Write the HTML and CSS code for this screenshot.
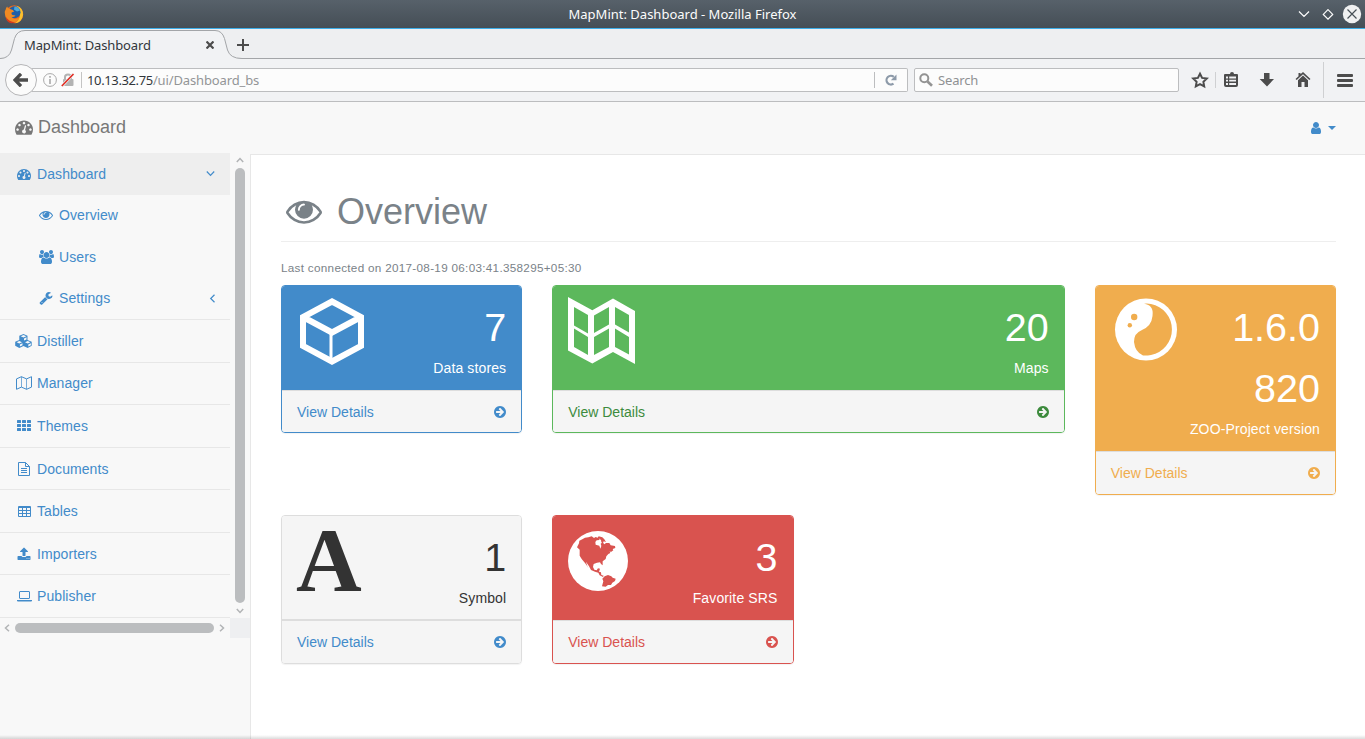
FILE: index.html
```html
<!DOCTYPE html>
<html lang="en">
<head>
<meta charset="utf-8">
<title>MapMint: Dashboard</title>
<link rel="stylesheet" href="styles.css">
</head>
<body>
<svg class="sprite" aria-hidden="true">
  <symbol id="tach" viewBox="0 0 1792 1792"><path d="M384 1152q0-53-37.5-90.5t-90.5-37.5-90.5 37.5-37.5 90.5 37.5 90.5 90.5 37.5 90.5-37.5 37.5-90.5zm192-448q0-53-37.5-90.5t-90.5-37.5-90.5 37.5-37.5 90.5 37.5 90.5 90.5 37.5 90.5-37.5 37.5-90.5zm428 481l101-382q6-26-7.5-48.5t-38.5-29.5-48 6.5-30 39.5l-101 382q-60 5-107 43.5t-63 98.5q-20 77 20 146t117 89 146-20 89-117q16-60-6-117t-72-91zm660-33q0-53-37.5-90.5t-90.5-37.5-90.5 37.5-37.5 90.5 37.5 90.5 90.5 37.5 90.5-37.5 37.5-90.5zm-640-640q0-53-37.5-90.5t-90.5-37.5-90.5 37.5-37.5 90.5 37.5 90.5 90.5 37.5 90.5-37.5 37.5-90.5zm448 192q0-53-37.5-90.5t-90.5-37.5-90.5 37.5-37.5 90.5 37.5 90.5 90.5 37.5 90.5-37.5 37.5-90.5zm320 448q0 261-141 483-19 29-54 29h-1402q-35 0-54-29-141-221-141-483 0-182 71-348t191-286 286-191 348-71 348 71 286 191 191 286 71 348z"/></symbol>
  <symbol id="eye" viewBox="0 0 1792 1792"><path d="M1664 960q-152-236-381-353 61 104 61 225 0 185-131.5 316.5t-316.5 131.5-316.5-131.5-131.5-316.5q0-121 61-225-229 117-381 353 133 205 333.500 326.500t434.500 121.500 434.500-121.500 333.500-326.500zm-720-384q0-20-14-34t-34-14q-125 0-214.500 89.500t-89.500 214.500q0 20 14 34t34 14 34-14 14-34q0-86 61-147t147-61q20 0 34-14t14-34zm848 384q0 34-20 69-140 230-376.500 368.500t-499.500 138.500-499.500-139-376.500-368q-20-35-20-69t20-69q140-229 376.500-368t499.500-139 499.500 139 376.500 368q20 35 20 69z"/></symbol>
  <symbol id="users" viewBox="-64 0 1920 1792"><path d="M529 896q-162 5-265 128h-134q-82 0-138-40.500t-56-118.500q0-353 124-353 6 0 43.500 21t97.500 42.500 119 21.500q67 0 133-23-5 37-5 66 0 139 81 256zm1071 637q0 120-73 189.500t-194 69.500h-874q-121 0-194-69.500t-73-189.500q0-53 3.500-103.500t14-109 26.500-108.500 43-97.500 62-81 85.500-53.500 111.500-20q10 0 43 21.500t73 48 107 48 135 21.500 135-21.500 107-48 73-48 43-21.500q61 0 111.500 20t85.500 53.500 62 81 43 97.500 26.500 108.500 14 109 3.500 103.500zm-1024-1277q0 106-75 181t-181 75-181-75-75-181 75-181 181-75 181 75 75 181zm704 384q0 159-112.500 271.500t-271.500 112.500-271.500-112.500-112.500-271.500 112.500-271.500 271.500-112.500 271.500 112.500 112.500 271.500zm576 225q0 78-56 118.500t-138 40.500h-134q-103-123-265-128 81-117 81-256 0-29-5-66 66 23 133 23 59 0 119-21.500t97.500-42.500 43.500-21q124 0 124 353zm-128-609q0 106-75 181t-181 75-181-75-75-181 75-181 181-75 181 75 75 181z"/></symbol>
  <symbol id="wrench" viewBox="0 0 1792 1792"><path d="M448 1472q0-26-19-45t-45-19-45 19-19 45 19 45 45 19 45-19 19-45zm644-420l-682 682q-37 37-90 37-52 0-91-37l-106-108q-38-36-38-90 0-53 38-91l681-681q39 98 114.500 173.500t173.500 114.500zm634-435q0 39-23 106-47 134-164.500 217.500t-258.500 83.500q-185 0-316.500-131.500t-131.500-316.500 131.500-316.500 316.500-131.500q58 0 121.500 16.500t107.500 46.500q16 11 16 28t-16 28l-293 169v224l193 107q5-3 79-48.500t135.500-81 70.500-35.500q15 0 23.500 10t8.500 25z"/></symbol>
  <symbol id="upload" viewBox="0 0 1792 1792"><path d="M1344 1472q0-26-19-45t-45-19-45 19-19 45 19 45 45 19 45-19 19-45zm256 0q0-26-19-45t-45-19-45 19-19 45 19 45 45 19 45-19 19-45zm128-224v320q0 40-28 68t-68 28h-1472q-40 0-68-28t-28-68v-320q0-40 28-68t68-28h427q21 56 70.500 92t110.500 36h256q61 0 110.500-36t70.500-92h427q40 0 68 28t28 68zm-325-648q-17 40-59 40h-256v448q0 26-19 45t-45 19h-256q-26 0-45-19t-19-45v-448h-256q-42 0-59-40-17-39 14-69l448-448q18-19 45-19t45 19l448 448q31 30 14 69z"/></symbol>
  <symbol id="user" viewBox="0 0 1792 1792"><path d="M1536 1399q0 109-62.500 187t-150.500 78h-854q-88 0-150.500-78t-62.500-187q0-85 8.500-160.500t31.500-152 58.500-131 94-89 134.500-34.500q131 128 313 128t313-128q76 0 134.500 34.500t94 89 58.500 131 31.500 152 8.500 160.500zm-256-887q0 159-112.500 271.500t-271.500 112.500-271.500-112.500-112.500-271.500 112.500-271.500 271.500-112.500 271.500 112.500 112.500 271.500z"/></symbol>
  <symbol id="go" viewBox="128 128 1536 1536"><path d="M1413 896q0-27-18-45l-91-91-362-362q-18-18-45-18t-45 18l-91 91q-18 18-18 45t18 45l189 189h-502q-26 0-45 19t-19 45v128q0 26 19 45t45 19h502l-189 189q-18 18-18 45t18 45l91 91q18 18 45 18t45-18l362-362 91-91q18-18 18-45zm251 0q0 209-103 385.500t-279.500 279.500-385.500 103-385.500-103-279.500-279.500-103-385.500 103-385.500 279.500-279.500 385.500-103 385.500 103 279.500 279.500 103 385.500z"/></symbol>
  <symbol id="cubes" viewBox="0 0 17 14"><path fill-rule="evenodd" d="M8.500 0l4 1.700v4.200l4.200 1.900v4L12.700 14 8.500 12 4.300 14 .2 11.800v-4l4.100-1.900V1.700zM5.700 2.200l2.800 1.200 2.800-1.200L8.500 1.100zM9 4.400V6.500l2.500-1.100V3.300zM1.600 8.200l2.700 1.200L7 8.200 4.300 7zm3.300 2.200v2.100l2.600-1.300V9.200zm5.100-2.200l2.700 1.200 2.700-1.200L12.700 7zm3.300 2.200v2.100l2.600-1.300V9.200z"/></symbol>
  <symbol id="map-o" viewBox="0 0 16 14"><path fill="none" stroke="currentColor" d="M.5 2.900L5.400.7l5.200 2.200 4.900-2.200v10.400l-4.900 2.200-5.200-2.200-4.900 2.200z"/><path fill="none" stroke="currentColor" stroke-width=".7" d="M5.500.7v10.400m5-8.200v10.400"/></symbol>
  <symbol id="th" viewBox="0 0 14 11"><path d="M.6 0h2.800q.6 0 .6.600v1.800q0 .6-.6.600H.6Q0 3 0 2.400V.6Q0 0 .6 0zm5 0h2.800q.6 0 .6.600v1.800q0 .6-.6.600H5.600Q5 3 5 2.400V.6q0-.6.600-.6zm5 0h2.800q.6 0 .6.600v1.800q0 .6-.6.600h-2.800q-.6 0-.6-.6V.6q0-.6.600-.6zM.6 4h2.800q.6 0 .6.600v1.800q0 .6-.6.600H.6Q0 7 0 6.400V4.600Q0 4 .6 4zm5 0h2.800q.6 0 .6.600v1.800q0 .6-.6.600H5.600Q5 7 5 6.400V4.600q0-.6.600-.6zm5 0h2.800q.6 0 .6.600v1.800q0 .6-.6.600h-2.800q-.6 0-.6-.6V4.600q0-.6.600-.6zM.6 8h2.800q.6 0 .6.600v1.800q0 .6-.6.600H.6q-.6 0-.6-.6V8.600Q0 8 .6 8zm5 0h2.800q.6 0 .6.600v1.800q0 .6-.6.600H5.600q-.6 0-.6-.6V8.600q0-.6.600-.6zm5 0h2.800q.6 0 .6.600v1.800q0 .6-.6.600h-2.800q-.6 0-.6-.6V8.600q0-.6.600-.6z"/></symbol>
  <symbol id="doc" viewBox="0 0 12 14"><path fill="none" stroke="currentColor" d="M.5.500h7l4 4v9H.5zM7.500.500v4h4M3 6.500h6M3 8.500h6M3 10.500h6"/></symbol>
  <symbol id="table" viewBox="0 0 13 11"><rect width="13" height="11" rx="1"/><path fill="#f8f8f8" d="M1 2h3v2H1zm4 0h3v2H5zm4 0h3v2H9zM1 5h3v2H1zm4 0h3v2H5zm4 0h3v2H9zM1 8h3v2H1zm4 0h3v2H5zm4 0h3v2H9z"/></symbol>
  <symbol id="laptop" viewBox="0 0 15 11"><path fill="none" stroke="currentColor" d="M2.500 1q0-.500.500-.500h9q.500 0 .500.500v6q0 .500-.500.500H3q-.500 0-.500-.500z"/><path d="M0 9h15v.8q0 .7-1 .7H1q-1 0-1-.7z"/></symbol>
</svg>

<header class="titlebar">
  <svg class="fox" viewBox="0 0 19 19"><circle cx="9.700" cy="9.300" r="9" fill="#e8681c"/><path d="M12 .8q7 2 6.500 9.500-1 7-8 8 5-4 5-9T12 .8z" fill="#fbc12e"/><circle cx="10" cy="7.200" r="6" fill="#1f5fa8"/><path d="M10 1.500q4 0 5.500 4l-3 1-3-2z" fill="#4aa9dc"/><path d="M1 5Q1.500 2.500 2.600 1.500q.6 2 2.400 2.300L8.200 5l1.500 1.500-2.500 1Q6.500 9 8 10l3 .5q-1.500 2-4 1.500 3 3.500 8 .5-2 5-7 5T1.200 12 1 5z" fill="#f08a22"/><path d="M1.500 12q3 5 9 5.300-5 2.500-8-1.500-1-1.500-1-3.800z" fill="#d33a1d"/></svg>
  <span class="window-title">MapMint: Dashboard - Mozilla Firefox</span>
  <svg class="winctl" viewBox="0 0 64 20"><path d="M1 7.500l5 5 5-5M30 5.700l4.700 4.700L30 15.100l-4.700-4.700z" fill="none" stroke="#fcfcfc" stroke-width="1.200"/><circle cx="54" cy="10" r="9.200" fill="#eff0f1"/><path d="M49.500 5.500l9 9m0-9l-9 9" stroke="#475057" stroke-width="1.200"/></svg>
</header>
<div class="tabs">
  <div class="tab">
    <svg class="tab-shape" viewBox="0 0 242 30"><path d="M0 30v-.5Q9 29.500 11.500 21L14.500 9.500Q17 1.500 25 1.500H215Q222 1.500 224.500 9.500L227.500 21Q230 29.500 242 29.500v.5z" fill="#f1f2f4"/><path d="M0 29.500Q9 29.500 11.500 21L14.500 9.500Q17 1.500 25 1.500H215Q222 1.500 224.500 9.500L227.500 21Q230 29.500 242 29.500" fill="none" stroke="#a3a5a8"/></svg>
    <span class="tab-label">MapMint: Dashboard</span>
    <svg class="tab-close" viewBox="0 0 8 8"><path d="M.5.500l7 7m0-7l-7 7" stroke="#4c4c4c" stroke-width="2.200"/></svg>
  </div>
  <svg class="plus" viewBox="0 0 12 12"><path d="M6 0v12M0 6h12" stroke="#4c4c4c" stroke-width="2"/></svg>
</div>
<div class="toolbar">
  <div class="back"><svg viewBox="0 0 16 14"><path d="M8 .8L2 7l6 6.200M2 7h13" fill="none" stroke="#4c4c4c" stroke-width="3.300"/></svg></div>
  <div class="urlbar">
    <svg class="info" viewBox="0 0 14 14"><circle cx="7" cy="7" r="6.400" fill="none" stroke="#a9a9a9"/><path d="M7 3v1.700M7 6v5" stroke="#a9a9a9" stroke-width="1.600"/></svg>
    <svg class="lock" viewBox="0 0 14 14"><rect x="2" y="6" width="10.500" height="7" rx="1" fill="#b3b3b3"/><path d="M4 6.500V4q0-2.500 3-2.500T10 4v2.500" fill="none" stroke="#b3b3b3" stroke-width="2"/><path d="M.8 13.300L12.500.8" stroke="#f1f1f1" stroke-width="2.800"/><path d="M.8 13L12.500 1" stroke="#e1261c" stroke-width="1.500"/></svg>
    <span class="url"><b>10.13.32.75</b>/ui/Dashboard_bs</span>
    <span class="reload"><svg viewBox="0 0 12 12"><path d="M8.500 9.700A4.400 4.400 0 1 1 8.800 2.800" fill="none" stroke="#8d9aa9" stroke-width="2.200"/><path d="M11.500.5v5.800H5.800z" fill="#8d9aa9"/></svg></span>
  </div>
  <div class="search"><svg viewBox="0 0 14 14"><circle cx="5.300" cy="5.300" r="4" fill="none" stroke="#939393" stroke-width="2"/><path d="M8.500 8.500l4.500 4.300" stroke="#939393" stroke-width="2.600"/></svg>Search</div>
  <svg class="tools" viewBox="0 0 173 36"><g fill="#4c4c4c"><path d="M16 11.700l2.100 4.200 4.700.6-3.400 3.300.8 4.600-4.200-2.200-4.200 2.200.8-4.600-3.400-3.300 4.700-.6z" fill="none" stroke="#4c4c4c" stroke-width="2"/><path d="M46 12h-5q-1 0-1 1v10q0 2 2 2h10q2 0 2-2V13q0-1-1-1h-3q0-2-2-2t-2 2z"/><path d="M42 14.500h2v2h-2zm3.200 0H52v2h-6.800zM42 17.800h2v1.700h-2zm3.200 0H52v1.700h-6.800zM42 21h2v2h-2zm3.200 0H52v2h-6.800z" fill="#f1f2f4"/><path d="M80 11h5.500v6H90l-7 7.500-7.300-7.500H80z"/><path d="M119 10l7.500 7-1.200 1L119 12.200 112.700 18l-1.200-1 3-2.800V11h2v1.300zM119 13.600l5 4.700V25h-3.500v-5h-3v5H114v-6.700z"/><rect x="153" y="12" width="16" height="3" rx="1"/><rect x="153" y="17" width="16" height="3" rx="1"/><rect x="153" y="22" width="16" height="3" rx="1"/></g><path d="M31.500 10v16M139.500 0v36" stroke="#cfd0d2"/></svg>
</div>

<div class="app">
  <nav class="topnav">
    <svg class="brand-icon"><use href="#tach"/></svg><span class="brand">Dashboard</span>
    <svg class="user"><use href="#user"/></svg><i class="caret"></i>
  </nav>
  <div class="columns">
    <aside class="sidebar">
      <div class="scroll-row">
        <ul class="menu">
          <li class="sub active"><svg><use href="#tach"/></svg>Dashboard<svg class="chev" viewBox="0 0 9 9"><path d="M.8 2.500l3.700 3.800 3.700-3.800"/></svg></li>
          <li class="sub child"><svg><use href="#eye"/></svg>Overview</li>
          <li class="sub child"><svg class="w15"><use href="#users"/></svg>Users</li>
          <li class="sub child last"><svg><use href="#wrench"/></svg>Settings<svg class="chev left" viewBox="0 0 9 9"><path d="M6.500.8L2.700 4.500l3.800 3.700"/></svg></li>
          <li><svg class="w17"><use href="#cubes"/></svg>Distiller</li>
          <li><svg class="w16"><use href="#map-o"/></svg>Manager</li>
          <li><svg class="th"><use href="#th"/></svg>Themes</li>
          <li class="low"><svg class="doc"><use href="#doc"/></svg>Documents</li>
          <li><svg class="table"><use href="#table"/></svg>Tables</li>
          <li><svg><use href="#upload"/></svg>Importers</li>
          <li><svg class="laptop"><use href="#laptop"/></svg>Publisher</li>
        </ul>
        <div class="vbar"><svg viewBox="0 0 8 6"><path d="M.8 5L4 1.500 7.200 5"/></svg><i></i><svg viewBox="0 0 8 6"><path d="M.8 1L4 4.500 7.200 1"/></svg></div>
      </div>
      <div class="hbar"><svg viewBox="0 0 6 8"><path d="M5 .8L1.500 4 5 7.200"/></svg><i></i><svg viewBox="0 0 6 8"><path d="M1 .8L4.500 4 1 7.200"/></svg><span class="corner"></span></div>
    </aside>
    <main>
      <h1><svg><use href="#eye"/></svg>Overview</h1>
      <p class="connected">Last connected on 2017-08-19 06:03:41.358295+05:30</p>
      <div class="cards">
        <section class="card blue">
          <div class="head">
            <svg class="big" viewBox="0 0 67 70"><path d="M35 5.500L64 21v29L35 65.500 6 50V21zM6 21l29 15.500L64 21" fill="none" stroke="#fff" stroke-width="6"/><path d="M34 37v28" stroke="#fff" stroke-width="3"/></svg>
            <div class="stat"><div class="num">7</div><div>Data stores</div></div>
          </div>
          <a class="foot">View Details<svg><use href="#go"/></svg></a>
        </section>
        <section class="card green wide">
          <div class="head">
            <svg class="big" viewBox="0 0 67 70"><path d="M0 0L24.300 13.200 45 1.600 67 14V67L45 55 24.300 66.500 0 53.500zM6 10v18.500l14 8V18zM26 18.500V36l15-8.500V10zM47 10v17.500l14 8V18zM6 31.500v18.500l14 8V40zM26 40v18l15-8V31.500zM47 31.500V50l14 7.500V40z" fill="#fff" fill-rule="evenodd"/></svg>
            <div class="stat"><div class="num">20</div><div>Maps</div></div>
          </div>
          <a class="foot">View Details<svg><use href="#go"/></svg></a>
        </section>
        <section class="card orange">
          <div class="head">
            <svg class="big" viewBox="0 0 67 70"><circle cx="35" cy="33.500" r="31" fill="#fff"/><path d="M33 7.800Q43 9 41.500 20 40.500 30 31 34 23 37 23 46 24 56 32 59.500Q36 59.700 40 59A26 26 0 0 0 40 8Q36 7 33 7.800z" fill="#f0ad4e"/><circle cx="23.200" cy="21" r="3.200" fill="#f0ad4e"/><circle cx="18.800" cy="29.200" r="2.200" fill="#f0ad4e"/></svg>
            <div class="stat"><div class="num">1.6.0</div><div class="num">820</div><div>ZOO-Project version</div></div>
          </div>
          <a class="foot">View Details<svg><use href="#go"/></svg></a>
        </section>
        <section class="card plain">
          <div class="head">
            <span class="letter">A</span>
            <div class="stat"><div class="num">1</div><div>Symbol</div></div>
          </div>
          <a class="foot">View Details<svg><use href="#go"/></svg></a>
        </section>
        <section class="card red">
          <div class="head">
            <svg class="globe" viewBox="9 9 180 180"><circle cx="99" cy="99" r="90" fill="#fff"/><path fill="#d9534f" d="M36 58L42 46 43 38 52 34 60 29 70 28 80 25 87 30 92 27 98 29 101 25 112 28 118 34 123 42 116 40 114 46 109 43 108 36 101 31 104 36 95 37 91 42 92 50 103 53 106 62 109 54 107 47 113 43 118 49 123 45 133 45 137 52 150 54 151 60 143 63 145 67 138 72 134 70 136 75 130 78 124 85 122 93 113 100 113 112 108 108 105 103 96 104 86 108 84 117 88 125 95 127 99 121 105 122 102 131 108 133 109 141 116 143 114 147 104 142 100 134 90 131 78 126 72 115 63 101 66 112 70 119 60 105 50 93 44 83 44 65zM119 145L129 141 139 145 143 149 152 152 150 159 142 164 138 171 129 171 122 176 111 175 115 160 112 152z"/></svg>
            <div class="stat"><div class="num">3</div><div>Favorite SRS</div></div>
          </div>
          <a class="foot">View Details<svg><use href="#go"/></svg></a>
        </section>
      </div>
    </main>
  </div>
</div>
<div class="edge"></div>
</body>
</html>
```
FILE: styles.css
```css
* { box-sizing: border-box; }
body { margin: 0; width: 1365px; height: 739px; overflow: hidden; font: 14px/20px "Liberation Sans", Arial, sans-serif; background: #fff; position: relative; display: flex; flex-direction: column; }
svg { fill: currentColor; flex: none; display: block; }
.sprite { position: absolute; width: 0; height: 0; }

.titlebar { height: 29px; flex: none; display: flex; align-items: center; border-bottom: 1px solid #3daee9; background: linear-gradient(#57616a, #454e56); font: 13px/20px "Noto Sans", sans-serif; color: #fcfcfc; padding: 0 3px 0 4px; }
.fox { width: 20px; height: 19px; }
.window-title { flex: 1; text-align: center; padding-left: 43px; }
.winctl { width: 64px; height: 20px; }

.tabs { height: 30px; flex: none; display: flex; background: #eeeff1; border-bottom: 1px solid #a3a5a8; font: 13px/20px "Noto Sans", sans-serif; color: #31363b; }
.tab { width: 236px; height: 30px; display: flex; align-items: center; position: relative; padding: 2px 22px 0 24px; }
.tab-shape { position: absolute; left: 0; top: 0; width: 242px; height: 30px; }
.tab-label, .tab-close { position: relative; }
.tab-label { flex: 1; letter-spacing: -.13px; }
.tab-close { width: 8px; height: 8px; }
.plus { width: 12px; height: 12px; margin: 10px 0 0 1px; position: relative; }

.toolbar { height: 43px; flex: none; display: flex; align-items: center; background: #f1f2f4; border-bottom: 1px solid #bcbdbf; padding-left: 5px; font: 13px/20px "Noto Sans", sans-serif; }
.back { width: 32px; height: 32px; border: 1px solid #b5b5b7; border-radius: 50%; background: #fbfbfb; display: grid; place-items: center; position: relative; z-index: 1; }
.back svg { width: 16px; height: 14px; }
.urlbar { width: 876px; height: 24px; margin-left: -5px; border: 1px solid #bcbdbf; border-left: 0; border-radius: 0 2px 2px 0; background: #fcfcfc; display: flex; align-items: center; padding-left: 11px; }
.info { width: 14px; height: 14px; margin-right: 4px; }
.lock { width: 14px; height: 14px; }
.url { flex: 1; margin-left: 6px; padding-left: 5px; border-left: 1px solid #c4c4c4; line-height: 16px; color: #939597; letter-spacing: -.13px; }
.url b { font-weight: 400; color: #31363b; letter-spacing: -.37px; }
.reload { width: 33px; height: 16px; border-left: 1px solid #bcbdbf; display: flex; align-items: center; padding-left: 10px; }
.reload svg { width: 12px; height: 12px; }
.search { width: 265px; height: 24px; margin-left: 6px; border: 1px solid #bcbdbf; border-radius: 2px; background: #fcfcfc; color: #8f9193; letter-spacing: -.15px; display: flex; align-items: center; gap: 5px; padding-left: 4px; }
.search svg { width: 14px; height: 14px; }
.tools { width: 173px; height: 36px; margin-left: 5px; }

.app { flex: 1; display: flex; flex-direction: column; background: #f8f8f8; }
.topnav { height: 52px; flex: none; display: flex; align-items: center; padding: 0 29px 0 15px; color: #777; }
.brand-icon { width: 18px; height: 18px; margin: -3px 5px 0 0; }
.brand { font-size: 18px; flex: 1; position: relative; top: -1px; }
.user { width: 14px; height: 14px; color: #428bca; margin-right: 5px; }
.caret { border: 4.500px solid transparent; border-top-color: #428bca; border-bottom: 0; }
.columns { flex: 1; display: flex; }
.sidebar { width: 250px; flex: none; margin-top: -1px; }
.scroll-row { display: flex; height: 465px; }
.menu { list-style: none; margin: 0; padding: 0; width: 230px; color: #428bca; letter-spacing: .08px; }
.menu li { height: 42.570px; border-bottom: 1px solid #e7e7e7; display: flex; align-items: center; padding: 0 15px 0 17px; }
.menu svg { width: 14px; height: 14px; margin-right: 6px; }
.menu .sub { height: 41.600px; border: 0; }
.menu .last { height: 42.200px; border-bottom: 1px solid #e7e7e7; }
.menu .active { background: #eee; }
.menu .low { padding-top: 1px; }
.menu .child { padding-left: 39px; }
.menu .w15 { width: 15px; margin-right: 5px; }
.menu .w16 { width: 16px; margin: 0 5px 0 -1px; }
.menu .w17 { width: 17px; margin: 0 5px 0 -2px; }
.menu .th { height: 11px; }
.menu .doc { width: 12px; margin: 0 7px 0 1px; }
.menu .table { width: 13px; height: 11px; margin: 0 6px 0 1px; }
.menu .laptop { width: 15px; height: 11px; margin-right: 5px; }
.menu .chev { width: 9px; height: 9px; margin: 0 0 0 auto; fill: none; stroke: #428bca; stroke-width: 1.200; }
.menu .left { margin-right: -2px; }
.vbar { width: 20px; display: flex; flex-direction: column; align-items: center; justify-content: space-between; padding: 4px 0 4px; }
.vbar i { width: 10px; height: 435px; border-radius: 5px; background: #bbbdbf; }
.vbar svg, .hbar svg { width: 8px; height: 6px; fill: none; stroke: #b2b4b6; stroke-width: 1.500; }
.hbar { height: 20px; display: flex; align-items: center; padding-left: 4px; gap: 5px; }
.hbar svg { width: 6px; height: 8px; }
.hbar i { width: 200px; height: 10px; border-radius: 5px; background: #bbbdbf; }
.corner { width: 20px; height: 20px; background: #eeeff1; margin-left: auto; }

main { flex: 1; border: solid #e7e7e7; border-width: 1px 0 0 1px; background: #fff; padding: 0 29px 0 30px; color: #7a8288; }
h1 { margin: 0; height: 87px; padding: 37px 0 0 5px; border-bottom: 1px solid #eee; font-weight: 400; font-size: 36px; line-height: 40px; display: flex; }
h1 svg { width: 36px; height: 36px; margin: 1px 15px 0 0; }
.connected { margin: 16px 0 7px; font-size: 11.700px; line-height: 20px; letter-spacing: .3px; white-space: nowrap; }
.cards { display: grid; grid-template-columns: repeat(4, 1fr); gap: 20px 30px; align-items: start; }
.wide { grid-column: span 2; }
.card { border: 1px solid; border-radius: 4px; overflow: hidden; box-shadow: 0 1px 1px rgba(0,0,0,.05); }
.head { display: flex; justify-content: space-between; height: 104px; padding: 11px 15px 0; color: #fff; }
.orange .head { height: 165px; }
.stat { text-align: right; letter-spacing: .13px; }
.num { font-size: 39.500px; line-height: 61px; letter-spacing: 0; }
.big { width: 67px; height: 70px; margin-top: -1px; }
.green .big { margin-top: 0; }
.globe { width: 60px; height: 60px; margin-top: 4px; }
.letter { font: bold 91px/104px "Liberation Serif", serif; margin: -18px 0 0 -1px; height: 104px; }
.foot { display: flex; justify-content: space-between; align-items: center; height: 42px; background: #f5f5f5; border-top: 1px solid #ddd; padding: 0 15px; }
.orange .foot, .plain .foot, .red .foot { height: 43px; }
.foot svg { width: 12px; height: 12px; }
.blue { border-color: #428bca; color: #428bca; }
.blue .head { background: #428bca; }
.green { border-color: #5cb85c; color: #3d8b3d; }
.green .head { background: #5cb85c; }
.orange { border-color: #f0ad4e; color: #f0ad4e; }
.orange .head { background: #f0ad4e; }
.red { border-color: #d9534f; color: #d9534f; }
.red .head { background: #d9534f; }
.plain { border-color: #ddd; color: #428bca; }
.plain .head { background: #f5f5f5; color: #333; border-bottom: 1px solid #ddd; }
.edge { position: absolute; left: 0; right: 0; bottom: 0; height: 4px; background: linear-gradient(rgba(0,0,0,0), rgba(0,0,0,.14)); }
```
